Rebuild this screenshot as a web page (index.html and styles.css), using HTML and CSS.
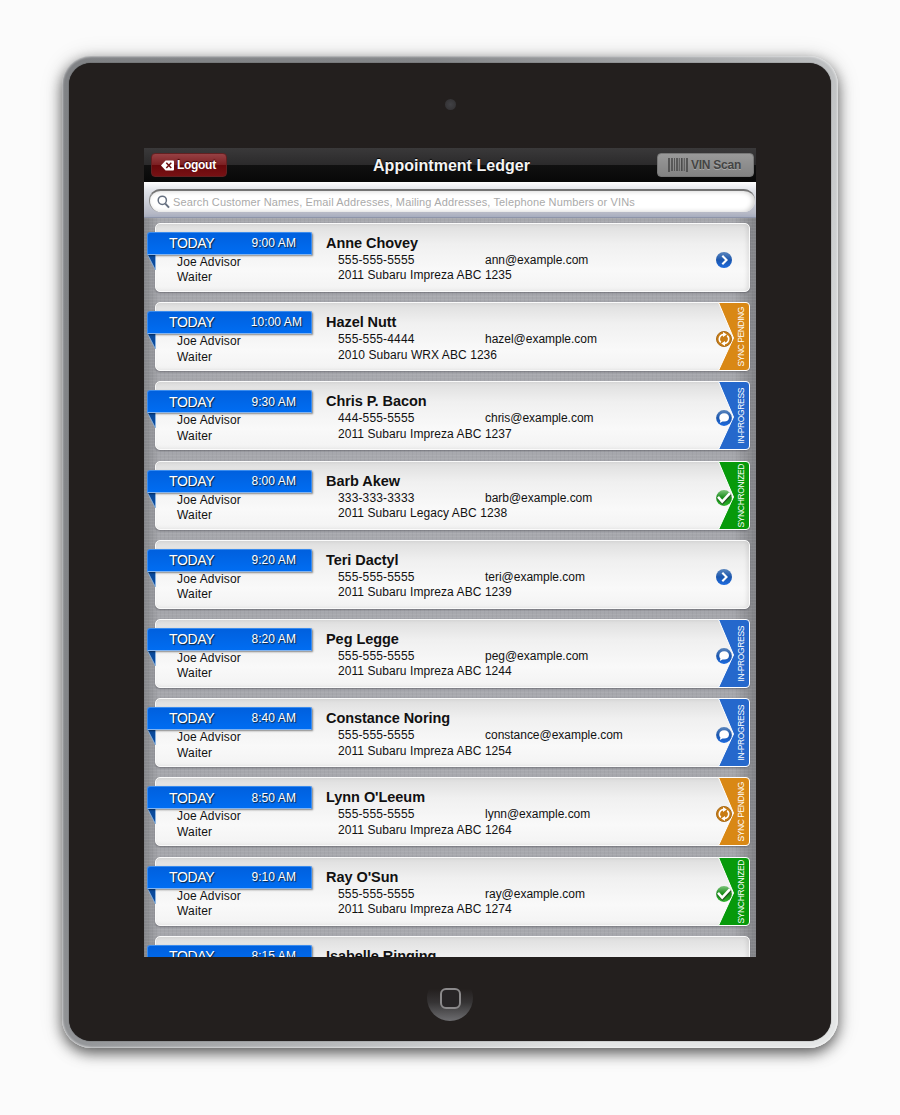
FILE: index.html
```html
<!DOCTYPE html>
<html lang="en">
<head>
<meta charset="utf-8">
<title>Appointment Ledger</title>
<link rel="stylesheet" href="styles.css">
</head>
<body>
<svg class="defs" width="0" height="0" aria-hidden="true">
  <defs>
    <linearGradient id="blueBall" x1="0" y1="0" x2="0" y2="1"><stop offset="0" stop-color="#5b86bd"/><stop offset=".5" stop-color="#1b56ad"/><stop offset="1" stop-color="#1d6be0"/></linearGradient>
    <linearGradient id="greenBall" x1="0" y1="0" x2="0" y2="1"><stop offset="0" stop-color="#7cc47a"/><stop offset=".5" stop-color="#158a17"/><stop offset="1" stop-color="#2fb52c"/></linearGradient>
  </defs>
  <symbol id="next" viewBox="0 0 18 18"><circle cx="9" cy="9" r="8" fill="url(#blueBall)"/><path d="M7.300 4.800L11.500 9l-4.200 4.200" fill="none" stroke="#fff" stroke-width="2.1"/></symbol>
  <symbol id="pending" viewBox="0 0 18 18"><circle cx="9" cy="9" r="7.500" fill="#c87c14" stroke="#a86a18" stroke-width="1"/><path d="M5.800 12.400A4.600 4.600 0 0 1 8.600 4.400M12.200 5.600A4.600 4.600 0 0 1 9.400 13.600" fill="none" stroke="#fff" stroke-width="1.5"/><path d="M8 2l3.800 2.500L8 7zM10 16l-3.800-2.500L10 11z" fill="#fff"/></symbol>
  <symbol id="progress" viewBox="0 0 18 18"><circle cx="9" cy="9" r="7.900" fill="url(#blueBall)"/><path d="M9.200 4.300c3 0 4.800 1.800 4.800 4.200s-1.800 4.100-4.800 4.100c-.6 0-1.200-.1-1.700-.2L4.800 14l.6-2.600C4.600 10.700 4.300 9.700 4.300 8.500c0-2.400 1.900-4.200 4.900-4.200z" fill="#fff"/></symbol>
  <symbol id="synced" viewBox="0 0 18 18"><circle cx="9" cy="9" r="7.900" fill="url(#greenBall)"/><path d="M3.200 8.800l4.300 5L15.600 5" fill="none" stroke="#222" stroke-opacity=".6" stroke-width="2.800"/><path d="M3 7.900l4.200 4.700L15 4.200" fill="none" stroke="#fff" stroke-width="2.600"/></symbol>
</svg>
<div class="tablet">
  <div class="glass">
    <div class="camera"></div>
    <main class="screen">
      <header class="nav">
        <button class="btn logout"><svg width="13" height="11" viewBox="0 0 13 11"><path d="M4.600.5H12a1 1 0 0 1 1 1v8a1 1 0 0 1-1 1H4.600L0 5.500z" fill="#fff"/><path d="M5.300 2.800l5 5.200M10.300 2.800L5.300 8" stroke="#701010" stroke-width="1.500"/></svg><span>Logout</span></button>
        <h1>Appointment Ledger</h1>
        <button class="btn vin"><svg width="20" height="14" viewBox="0 0 20 14"><path d="M1 0v14M19 0v14" stroke="#484848" stroke-width="1.600"/><path d="M4 0v13M9 0v13M13.800 0v13" stroke="#4c4c4c" stroke-width="1.600"/><path d="M6.500 0v13M11.300 0v13M16.300 0v13" stroke="#555" stroke-width="1"/></svg><span>VIN Scan</span></button>
      </header>
      <div class="search"><div class="field"><svg width="13" height="14" viewBox="0 0 13 14"><circle cx="5.300" cy="5.300" r="4.100" fill="none" stroke="#667080" stroke-width="1.500"/><path d="M8.300 8.600l3.700 4" stroke="#667080" stroke-width="2"/></svg><span>Search Customer Names, Email Addresses, Mailing Addresses, Telephone Numbers or VINs</span></div></div>
      <section class="list" id="list"></section>
    </main>
    <div class="home"><i></i></div>
  </div>
</div>
<script src="ledger.js"></script>
</body>
</html>
```
FILE: styles.css
```css
* { box-sizing: border-box; }
body { margin: 0; height: 1115px; overflow: hidden; background: #fbfbfb; font-family: "Liberation Sans", Arial, sans-serif; color: #111; padding: 56px 62px; }
.defs { position: absolute; }
.tablet { width: 776px; height: 992px; padding: 7px; border-radius: 29px; background: linear-gradient(115deg, #808285 0%, #85878a 30%, #b5b7b9 58%, #e4e6e6 80%); box-shadow: inset 0 0 2px 1px rgba(255,255,255,.5), 0 5px 14px rgba(0,0,0,.6), 0 2px 24px rgba(0,0,0,.14); }
.glass { height: 978px; border-radius: 22px; background: #231f1e; display: flex; flex-direction: column; align-items: center; box-shadow: 0 0 1px 0 #111; }
.camera { width: 11px; height: 11px; margin: 36px 0 38px; border-radius: 50%; background: radial-gradient(#414145, #302e30); flex: none; }
.screen { width: 612px; height: 809px; flex: none; overflow: hidden; background: #a6a7ac; display: flex; flex-direction: column; }
.nav { height: 34px; flex: none; display: grid; grid-template-columns: 100px 1fr 100px; align-items: center; padding: 0 2px 0 7px; background: linear-gradient(#3a393a 0, #2b2a2b 49%, #101010 51%, #080808); }
.nav h1 { margin: 1px 0 0 -2px; font-size: 16px; line-height: 32px; letter-spacing: .03px; text-align: center; color: #f4f4f4; text-shadow: 0 -1px 1px #000; }
.btn { height: 24px; border-radius: 4px; display: flex; align-items: center; padding: 0; font: bold 12px/22px "Liberation Sans", Arial, sans-serif; }
.logout { width: 76px; padding-left: 9px; gap: 3px; color: #fff; letter-spacing: -.3px; border: 1px solid #632021; background: linear-gradient(#964144, #7d2023 48%, #68080b 52%, #781114); text-shadow: 0 -1px 1px #3a0000; }
.vin { width: 97px; justify-self: end; padding-left: 10px; gap: 3px; color: #444; letter-spacing: -.35px; border: 1px solid #777; background: linear-gradient(#999, #828282); text-shadow: 0 1px #aaa; }
.vin { letter-spacing: -.25px; }
.search { height: 36px; flex: none; padding: 7px 1px 5px 5px; background: linear-gradient(#fff, #e0e2e8 25%, #b5b8c5 90%, #a7adbf); border-bottom: 1px solid #8d94a9; }
.field { height: 23px; border-radius: 11.500px; border-top: 2px solid #747474; border-left: 1px solid #888; background: #fff; display: flex; align-items: center; gap: 3px; padding-left: 7px; color: #aaa; font-size: 11px; line-height: 20px; letter-spacing: .13px; white-space: nowrap; box-shadow: inset -2px 0 5px #ccc; }
.list { flex: 1; min-height: 0; overflow: hidden; padding: 5px 6px 0 11px; display: flex; flex-direction: column; gap: 10.200px; background: repeating-linear-gradient(0deg, rgba(255,255,255,.06) 0 1px, transparent 1px 3px), repeating-linear-gradient(90deg, rgba(0,0,0,.03) 0 1px, transparent 1px 4px), linear-gradient(90deg, #85868a, #a5a6ab 15px, #a8a9ae 50%, #a5a6ab 590px, #808185); }
.card { position: relative; height: 69px; flex: none; border-radius: 5px; border: 1px solid #fafafa; background: linear-gradient(#dedede, #f0f0f0 30%, #f9f9f9 70%, #f3f3f3); box-shadow: 0 1px 2px rgba(40,40,50,.4), inset -2px 0 4px rgba(0,0,0,.09); display: grid; grid-template-columns: 170px 1fr; font-size: 12px; line-height: 15.400px; letter-spacing: .07px; }
.who { padding: 31px 0 0 21px; letter-spacing: .17px; }
.name { font-size: 14.500px; font-weight: bold; line-height: 18px; padding-top: 10px; margin-bottom: 1px; letter-spacing: -.05px; }
.contact { display: grid; grid-template-columns: 147px 1fr; padding-left: 12px; }
.contact span:first-child { letter-spacing: .15px; }
.contact span:last-child { letter-spacing: -.02px; }
.vehicle { padding-left: 12px; }
.ribbon { position: absolute; left: -9px; top: 8px; width: 165px; height: 23px; padding: 0 15px 0 21px; border-radius: 3px 2px 0 0; border: 1px solid #3b8cee; border-bottom-color: #83b4ef; background: linear-gradient(#0060de, #006df2); color: #fff; display: flex; justify-content: space-between; align-items: center; font-size: 12px; text-shadow: 1px 1px 1px #123; box-shadow: 1px 1px 2px rgba(0,0,0,.45); white-space: nowrap; }
.ribbon span { padding-top: 1px; }
.ribbon.late { padding-right: 9px; }
.ribbon b { font-size: 14px; font-weight: normal; letter-spacing: -.35px; padding-top: 1px; }
.fold { position: absolute; left: -9px; top: 30px; width: 9px; height: 17px; }
.tag { position: absolute; right: -1px; top: -1px; width: 32px; height: 69px; }
.tag text { font-family: "Liberation Sans", Arial, sans-serif; font-size: 8.500px; fill: #fff; }
.mark { position: absolute; right: 16px; top: 27px; width: 18px; height: 18px; }
.home { width: 46px; height: 46px; margin-top: 18px; border-radius: 50%; flex: none; background: linear-gradient(#231f1e 30%, #363435 60%, #6d6d70); display: grid; place-items: center; }
.home i { width: 21px; height: 21px; border: 2px solid #8b898b; border-radius: 6px; background: #272426; }
```
FILE: ledger.js
```js
const appointments = [
  ['9:00 AM', 'Anne Chovey', '555-555-5555', 'ann', '2011 Subaru Impreza ABC 1235', 'next'],
  ['10:00 AM', 'Hazel Nutt', '555-555-4444', 'hazel', '2010 Subaru WRX ABC 1236', 'pending'],
  ['9:30 AM', 'Chris P. Bacon', '444-555-5555', 'chris', '2011 Subaru Impreza ABC 1237', 'progress'],
  ['8:00 AM', 'Barb Akew', '333-333-3333', 'barb', '2011 Subaru Legacy ABC 1238', 'synced'],
  ['9:20 AM', 'Teri Dactyl', '555-555-5555', 'teri', '2011 Subaru Impreza ABC 1239', 'next'],
  ['8:20 AM', 'Peg Legge', '555-555-5555', 'peg', '2011 Subaru Impreza ABC 1244', 'progress'],
  ['8:40 AM', 'Constance Noring', '555-555-5555', 'constance', '2011 Subaru Impreza ABC 1254', 'progress'],
  ['8:50 AM', "Lynn O'Leeum", '555-555-5555', 'lynn', '2011 Subaru Impreza ABC 1264', 'pending'],
  ['9:10 AM', "Ray O'Sun", '555-555-5555', 'ray', '2011 Subaru Impreza ABC 1274', 'synced'],
  ['8:15 AM', 'Isabelle Ringing', '', '', '', '']
];
const states = {
  pending: ['SYNC PENDING', '#d98815', 60],
  progress: ['IN-PROGRESS', '#2568cc', 56],
  synced: ['SYNCHRONIZED', '#079a0b', 64]
};
const tag = s => states[s] ? `<svg class="tag" viewBox="0 0 32 69"><path d="M.5.500H28q3.500 0 3.500 3.500V65q0 3.500-3.500 3.500H.5L15.500 36z" fill="${states[s][1]}" stroke="#fff" stroke-width="1"/><text transform="translate(26 34.500) rotate(-90)" text-anchor="middle" textLength="${states[s][2]}">${states[s][0]}</text></svg>` : '';
document.getElementById('list').innerHTML = appointments.map(([time, name, phone, user, car, state]) => `
  <article class="card">
    <div class="who">${phone ? '<div>Joe Advisor</div><div>Waiter</div>' : ''}</div>
    <div class="info"><div class="name">${name}</div>
      <div class="contact"><span>${phone}</span><span>${user ? user + '@example.com' : ''}</span></div>
      <div class="vehicle">${car}</div></div>
    <svg class="fold" viewBox="0 0 9 17"><path d="M.5.500H8.500V16z" fill="#0a4a9c" stroke="#8fb9e6" stroke-width=".8"/></svg>
    <div class="ribbon${time.length > 7 ? ' late' : ''}"><b>TODAY</b><span>${time}</span></div>
    ${tag(state)}
    ${state ? `<svg class="mark"><use href="#${state}"/></svg>` : ''}
  </article>`).join('');
```
